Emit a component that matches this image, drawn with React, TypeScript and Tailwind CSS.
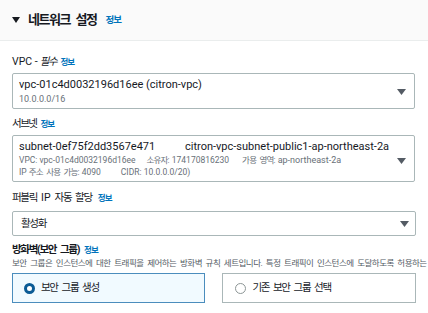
import { useState } from 'react';

const FONT = "font-['Roboto','Noto_Sans_CJK_KR',sans-serif]";

function Info({ className = '' }: { className?: string }) {
  return (
    <span className={`ml-[4px] text-[8.5px] font-bold tracking-[-1px] text-[#0073bb] ${className}`}>정보</span>
  );
}

function Caret({ className = '' }: { className?: string }) {
  return (
    <svg width="9" height="6" viewBox="0 0 9 6" className={className}>
      <path d="M0 0H9L4.5 6Z" fill="#545b64" />
    </svg>
  );
}

export default function App() {
  const [group, setGroup] = useState<'create' | 'existing'>('create');

  return (
    <div className={`h-[313px] w-[428px] overflow-hidden bg-white text-[#16191f] ${FONT}`}>
      <div className="flex h-[41px] items-center border-b border-[#eaeded] bg-[#fafafa] px-[12px]">
        <svg width="8" height="6" viewBox="0 0 8 6" className="mr-[8px]">
          <path d="M0 0H8L4 6Z" fill="#16191f" />
        </svg>
        <span className="text-[13px] font-bold tracking-[-1.5px] [word-spacing:4px]">네트워크 설정</span>
        <Info className="ml-[9px] text-[9.5px]" />
      </div>

      <div className="px-[12px]">
        <div className="mt-[14px] flex h-[14px] items-center text-[10.5px]">
          <span>VPC - </span>
          <span className="ml-[2px] italic tracking-[-1.3px]">필수</span>
          <Info />
        </div>
        <div className="mt-[4px] flex h-[36px] w-[403px] items-start justify-between rounded-[2px] border border-[#aab7b8] pl-[6px] pr-[8px] pt-[4px]">
          <div>
            <div className="h-[14px] text-[11px] leading-[14px]">vpc-01c4d0032196d16ee (citron-vpc)</div>
            <div className="mt-[1px] h-[12px] text-[9px] leading-[12px] text-[#687078]">10.0.0.0/16</div>
          </div>
          <Caret className="mt-[11px]" />
        </div>

        <div className="mt-[8px] flex h-[14px] items-center text-[10.5px]">
          <span className="tracking-[-1.5px]">서브넷</span>
          <Info />
        </div>
        <div className="mt-[4px] flex h-[47px] w-[403px] items-start justify-between rounded-[2px] border border-[#aab7b8] pl-[6px] pr-[8px] pt-[4px]">
          <div>
            <div className="flex h-[14px] text-[11px] leading-[14px]">
              <span className="w-[166px]">subnet-0ef75f2dd3567e471</span>
              <span>citron-vpc-subnet-public1-ap-northeast-2a</span>
            </div>
            <div className="flex h-[12px] text-[8.5px] leading-[12px] text-[#687078]">
              <span>VPC: vpc-01c4d0032196d16ee</span>
              <span className="ml-[11px]"><span className="tracking-[-0.8px]">소유자</span>: 174170816230</span>
              <span className="ml-[13px]"><span className="tracking-[-0.8px] [word-spacing:2px]">가용 영역</span>: <span className="text-[9px]">ap-northeast-2a</span></span>
            </div>
            <div className="flex h-[12px] text-[8.5px] leading-[12px] text-[#687078]">
              <span>IP <span className="tracking-[-0.8px] [word-spacing:2px]">주소 사용 가능</span>: 4090</span>
              <span className="ml-[20px]">CIDR: 10.0.0.0/20)</span>
            </div>
          </div>
          <Caret className="mt-[18px]" />
        </div>

        <div className="mt-[9px] flex h-[14px] items-center text-[10.5px] [word-spacing:2.5px]">
          <span className="tracking-[-1.3px]">퍼블릭</span>
          <span className="ml-[4px]">IP</span>
          <span className="ml-[4px] tracking-[-1.3px]">자동 할당</span>
          <Info className="ml-[6px]" />
        </div>
        <div className="mt-[6px] flex h-[25px] w-[404px] items-center justify-between rounded-[2px] border border-[#aab7b8] pl-[8px] pr-[6px]">
          <span className="text-[10.5px] tracking-[-1.3px]">활성화</span>
          <Caret />
        </div>

        <div className="mt-[7px] flex h-[14px] items-center text-[10.5px] font-bold">
          <span className="tracking-[-1.3px] [word-spacing:2.5px]">방화벽(보안 그룹)</span>
          <Info className="ml-[5px]" />
        </div>
        <div className="h-[12px] whitespace-nowrap text-[8.5px] leading-[12px] tracking-[-0.5px] text-[#545b64] [word-spacing:2px]">
          보안 그룹은 인스턴스에 대한 트래픽을 제어하는 방화벽 규칙 세트입니다. 특정 트래픽이 인스턴스에 도달하도록 허용하는 규칙을 추가합니다.
        </div>

        <div className="mt-[4px] flex gap-[17px]">
          <button
            onClick={() => setGroup('create')}
            className={`flex h-[30px] w-[197px] items-center border pl-[11px] text-left ${group === 'create' ? 'border-[#4b8dbd] bg-[#f1faff]' : 'border-[#aab7b8] bg-white'}`}
          >
            <span className={`h-[11px] w-[11px] rounded-full ${group === 'create' ? 'border-[3.5px] border-[#0b5b95] bg-white' : 'border border-[#aab7b8]'}`} />
            <span className="ml-[6px] text-[10.5px] tracking-[-1.3px] [word-spacing:2.5px]">보안 그룹 생성</span>
          </button>
          <button
            onClick={() => setGroup('existing')}
            className={`flex h-[30px] w-[197px] items-center border pl-[12px] text-left ${group === 'existing' ? 'border-[#4b8dbd] bg-[#f1faff]' : 'border-[#aab7b8] bg-white'}`}
          >
            <span className={`h-[11px] w-[11px] rounded-full ${group === 'existing' ? 'border-[3.5px] border-[#0b5b95] bg-white' : 'border border-[#8d9696]'}`} />
            <span className="ml-[6px] text-[10.5px] tracking-[-1.3px] [word-spacing:2.5px]">기존 보안 그룹 선택</span>
          </button>
        </div>
      </div>
    </div>
  );
}
